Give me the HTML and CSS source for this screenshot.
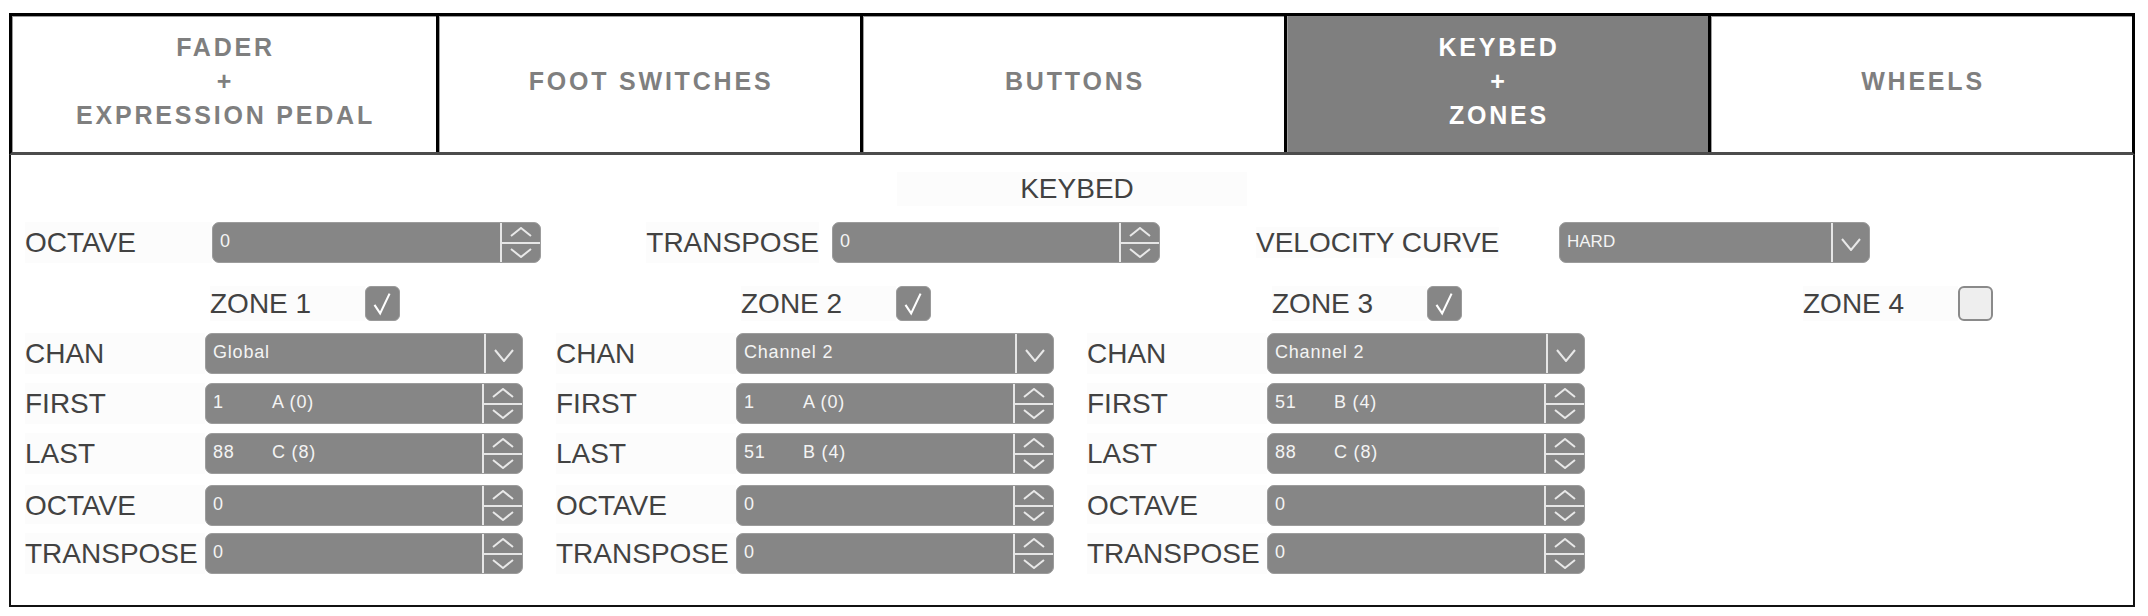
FILE: index.html
```html
<!DOCTYPE html>
<html>
<head>
<meta charset="utf-8">
<link rel="stylesheet" href="styles.css">
</head>
<body>
<div class="app">
  <div class="tabs">
    <div class="tab">FADER<br>+<br>EXPRESSION PEDAL</div>
    <div class="tab">FOOT SWITCHES</div>
    <div class="tab">BUTTONS</div>
    <div class="tab active">KEYBED<br>+<br>ZONES</div>
    <div class="tab">WHEELS</div>
  </div>
  <div class="panel">
    <div class="title"><span class="lbl">KEYBED</span></div>
    <div class="toprow">
      <div class="lbl c1">OCTAVE</div>
      <div class="spin w329"><span class="val">0</span><div class="btns"><div class="b"><svg viewBox="0 0 22 10"><path d="M1 9 L11 1 L21 9"/></svg></div><div class="b"><svg viewBox="0 0 22 10"><path d="M1 1 L11 9 L21 1"/></svg></div></div></div>
      <div class="c2"><span class="lbl">TRANSPOSE</span></div>
      <div class="spin w328"><span class="val">0</span><div class="btns"><div class="b"><svg viewBox="0 0 22 10"><path d="M1 9 L11 1 L21 9"/></svg></div><div class="b"><svg viewBox="0 0 22 10"><path d="M1 1 L11 9 L21 1"/></svg></div></div></div>
      <div class="c3"><span class="lbl">VELOCITY CURVE</span></div>
      <div class="sel w311"><span class="val small">HARD</span><div class="arr"><svg viewBox="0 0 20 13"><path d="M1 1 L10 12 L19 1"/></svg></div></div>
    </div>
    <div class="zones">
      <div class="zone">
        <div class="zhead"><span class="lbl zl">ZONE 1</span><span class="chk on"><svg viewBox="0 0 35 35"><path d="M9 19 L15 28 L25 7"/></svg></span></div>
        <div class="zrows">
          <div class="lbl">CHAN</div>
          <div class="sel"><span class="val">Global</span><div class="arr"><svg viewBox="0 0 20 13"><path d="M1 1 L10 12 L19 1"/></svg></div></div>
          <div class="lbl">FIRST</div>
          <div class="spin"><span class="val"><span class="num">1</span>A (0)</span><div class="btns"><div class="b"><svg viewBox="0 0 22 10"><path d="M1 9 L11 1 L21 9"/></svg></div><div class="b"><svg viewBox="0 0 22 10"><path d="M1 1 L11 9 L21 1"/></svg></div></div></div>
          <div class="lbl">LAST</div>
          <div class="spin"><span class="val"><span class="num">88</span>C (8)</span><div class="btns"><div class="b"><svg viewBox="0 0 22 10"><path d="M1 9 L11 1 L21 9"/></svg></div><div class="b"><svg viewBox="0 0 22 10"><path d="M1 1 L11 9 L21 1"/></svg></div></div></div>
          <div class="lbl gap">OCTAVE</div>
          <div class="spin gap"><span class="val">0</span><div class="btns"><div class="b"><svg viewBox="0 0 22 10"><path d="M1 9 L11 1 L21 9"/></svg></div><div class="b"><svg viewBox="0 0 22 10"><path d="M1 1 L11 9 L21 1"/></svg></div></div></div>
          <div class="lbl">TRANSPOSE</div>
          <div class="spin"><span class="val">0</span><div class="btns"><div class="b"><svg viewBox="0 0 22 10"><path d="M1 9 L11 1 L21 9"/></svg></div><div class="b"><svg viewBox="0 0 22 10"><path d="M1 1 L11 9 L21 1"/></svg></div></div></div>
        </div>
      </div>
      <div class="zone">
        <div class="zhead"><span class="lbl zl">ZONE 2</span><span class="chk on"><svg viewBox="0 0 35 35"><path d="M9 19 L15 28 L25 7"/></svg></span></div>
        <div class="zrows">
          <div class="lbl">CHAN</div>
          <div class="sel"><span class="val">Channel 2</span><div class="arr"><svg viewBox="0 0 20 13"><path d="M1 1 L10 12 L19 1"/></svg></div></div>
          <div class="lbl">FIRST</div>
          <div class="spin"><span class="val"><span class="num">1</span>A (0)</span><div class="btns"><div class="b"><svg viewBox="0 0 22 10"><path d="M1 9 L11 1 L21 9"/></svg></div><div class="b"><svg viewBox="0 0 22 10"><path d="M1 1 L11 9 L21 1"/></svg></div></div></div>
          <div class="lbl">LAST</div>
          <div class="spin"><span class="val"><span class="num">51</span>B (4)</span><div class="btns"><div class="b"><svg viewBox="0 0 22 10"><path d="M1 9 L11 1 L21 9"/></svg></div><div class="b"><svg viewBox="0 0 22 10"><path d="M1 1 L11 9 L21 1"/></svg></div></div></div>
          <div class="lbl gap">OCTAVE</div>
          <div class="spin gap"><span class="val">0</span><div class="btns"><div class="b"><svg viewBox="0 0 22 10"><path d="M1 9 L11 1 L21 9"/></svg></div><div class="b"><svg viewBox="0 0 22 10"><path d="M1 1 L11 9 L21 1"/></svg></div></div></div>
          <div class="lbl">TRANSPOSE</div>
          <div class="spin"><span class="val">0</span><div class="btns"><div class="b"><svg viewBox="0 0 22 10"><path d="M1 9 L11 1 L21 9"/></svg></div><div class="b"><svg viewBox="0 0 22 10"><path d="M1 1 L11 9 L21 1"/></svg></div></div></div>
        </div>
      </div>
      <div class="zone">
        <div class="zhead"><span class="lbl zl">ZONE 3</span><span class="chk on"><svg viewBox="0 0 35 35"><path d="M9 19 L15 28 L25 7"/></svg></span></div>
        <div class="zrows">
          <div class="lbl">CHAN</div>
          <div class="sel"><span class="val">Channel 2</span><div class="arr"><svg viewBox="0 0 20 13"><path d="M1 1 L10 12 L19 1"/></svg></div></div>
          <div class="lbl">FIRST</div>
          <div class="spin"><span class="val"><span class="num">51</span>B (4)</span><div class="btns"><div class="b"><svg viewBox="0 0 22 10"><path d="M1 9 L11 1 L21 9"/></svg></div><div class="b"><svg viewBox="0 0 22 10"><path d="M1 1 L11 9 L21 1"/></svg></div></div></div>
          <div class="lbl">LAST</div>
          <div class="spin"><span class="val"><span class="num">88</span>C (8)</span><div class="btns"><div class="b"><svg viewBox="0 0 22 10"><path d="M1 9 L11 1 L21 9"/></svg></div><div class="b"><svg viewBox="0 0 22 10"><path d="M1 1 L11 9 L21 1"/></svg></div></div></div>
          <div class="lbl gap">OCTAVE</div>
          <div class="spin gap"><span class="val">0</span><div class="btns"><div class="b"><svg viewBox="0 0 22 10"><path d="M1 9 L11 1 L21 9"/></svg></div><div class="b"><svg viewBox="0 0 22 10"><path d="M1 1 L11 9 L21 1"/></svg></div></div></div>
          <div class="lbl">TRANSPOSE</div>
          <div class="spin"><span class="val">0</span><div class="btns"><div class="b"><svg viewBox="0 0 22 10"><path d="M1 9 L11 1 L21 9"/></svg></div><div class="b"><svg viewBox="0 0 22 10"><path d="M1 1 L11 9 L21 1"/></svg></div></div></div>
        </div>
      </div>
      <div class="zone">
        <div class="zhead"><span class="lbl zl">ZONE 4</span><span class="chk"></span></div>
      </div>
    </div>
  </div>
</div>
</body>
</html>
```
FILE: styles.css
```css
html, body {
  margin: 0;
  padding: 0;
  background: #ffffff;
}
body {
  font-family: "Liberation Sans", Arial, sans-serif;
}
.app {
  margin: 13px 0 0 9px;
  width: 2126px;
}
.tabs {
  display: grid;
  grid-template-columns: repeat(5, 1fr);
  height: 142px;
  box-sizing: border-box;
  border: 3px solid #000;
  border-bottom: 3px solid #4c4c4c;
  box-shadow: inset 1px 1px 0 #9a9a9a;
}
.tab {
  display: flex;
  align-items: center;
  justify-content: center;
  text-align: center;
  padding: 0 0 6px 3px;
  font-weight: bold;
  font-size: 25px;
  line-height: 34px;
  letter-spacing: 2.8px;
  color: #7f7f7f;
}
.tab + .tab {
  border-left: 3px solid #000;
  box-shadow: inset 1px 0 0 #a0a0a0;
}
.tab.active {
  background: #7f7f7f;
  color: #ffffff;
}
.panel {
  height: 452px;
  box-sizing: border-box;
  border: 2px solid #111;
  border-top: none;
  padding: 17px 0 0 14px;
}
.lbl {
  font-size: 28px;
  line-height: 41px;
  color: #424242;
  background: #fcfcfc;
  white-space: nowrap;
}
.title {
  height: 34px;
  display: flex;
  justify-content: center;
  padding-right: 14px;
}
.title .lbl {
  line-height: 34px;
  padding: 0 113px 0 123px;
}
.toprow {
  display: flex;
  margin-top: 16px;
  height: 41px;
}
.c1 { width: 187px; }
.c2 {
  width: 291px;
  display: flex;
  justify-content: flex-end;
  padding-right: 13px;
  box-sizing: border-box;
}
.c3 {
  width: 399px;
  padding-left: 96px;
  box-sizing: border-box;
}
.w329 { width: 329px; }
.w328 { width: 328px; }
.w311 { width: 311px; }

.spin, .sel {
  height: 41px;
  box-sizing: border-box;
  background: #868686;
  border: 1px solid #9c9c9c;
  border-radius: 7px;
  display: flex;
  overflow: hidden;
}
.val {
  flex: 1;
  display: flex;
  align-items: center;
  padding: 0 0 2px 7px;
  font-size: 18px;
  letter-spacing: 0.8px;
  color: #f4f4f4;
  white-space: nowrap;
}
.val.small {
  font-size: 17px;
  letter-spacing: 0;
}
.num {
  display: inline-block;
  width: 59px;
}
.btns {
  width: 38px;
  border-left: 2px solid #e6e6e6;
  display: flex;
  flex-direction: column;
}
.b {
  flex: 1;
  display: flex;
  align-items: center;
  justify-content: center;
}
.b + .b {
  border-top: 2px solid #e6e6e6;
}
.b svg {
  width: 22px;
  height: 10px;
}
.b path, .arr path {
  fill: none;
  stroke: #e8e8e8;
  stroke-width: 2;
}
.arr {
  width: 38px;
  border-left: 2px solid #e6e6e6;
  display: flex;
  align-items: center;
  justify-content: center;
  padding-top: 3px;
  box-sizing: border-box;
}
.arr svg {
  width: 20px;
  height: 13px;
}
.zones {
  display: grid;
  grid-template-columns: repeat(4, 531px);
  margin-top: 23px;
}
.zhead {
  display: flex;
  align-items: center;
  height: 35px;
  margin-left: 185px;
}
.zl {
  width: 155px;
  line-height: 35px;
}
.chk {
  width: 35px;
  height: 35px;
  box-sizing: border-box;
  border-radius: 6px;
  background: #eeeeee;
  border: 2px solid #8a8a8a;
}
.chk.on {
  background: #868686;
  border: 1px solid #9a9a9a;
}
.chk svg {
  width: 100%;
  height: 100%;
  display: block;
}
.chk path {
  fill: none;
  stroke: #ffffff;
  stroke-width: 2.2;
  stroke-linejoin: miter;
}
.zrows {
  display: grid;
  grid-template-columns: 180px 318px;
  grid-auto-rows: 41px;
  row-gap: 9px;
  margin-top: 12px;
}
.zrows .gap {
  margin-top: 2px;
}
```
